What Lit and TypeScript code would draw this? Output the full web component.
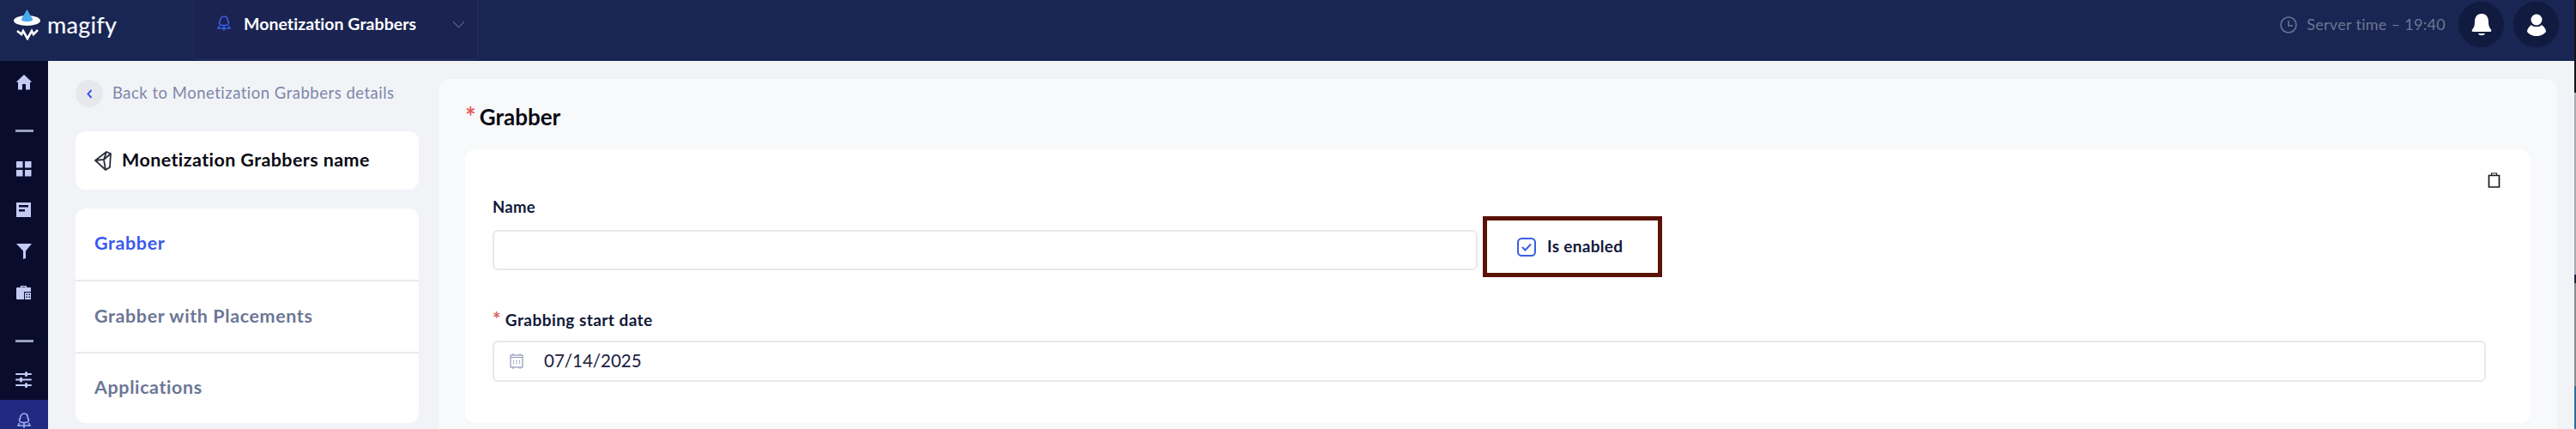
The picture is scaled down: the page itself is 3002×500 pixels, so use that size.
import { LitElement, html, css, svg } from "lit";
import { customElement } from "lit/decorators.js";

const cloud = svg`<path d="M7.500 11.500C4.500 11.500 3.500 8 5.500 6.500C5.500 3 8 1 10 1C12.500 1 14.500 3 14.500 6.500C16.500 8 15.500 11.500 12.500 11.500H7.500Z" fill="none" stroke="currentColor" stroke-width="1.600"/><path d="M10 11.500V18M4 12V15H10M16 12V15H10M2 15H4M16 15H18" fill="none" stroke="currentColor" stroke-width="1.600"/>`;

@customElement("app-root")
export class AppRoot extends LitElement {
  static styles = css`
    :host { display: block; width: 3002px; height: 500px; overflow: hidden; font-family: "Lato", "Liberation Sans", sans-serif; }
    * { box-sizing: border-box; }
    .shell { display: flex; width: 3002px; height: 500px; }
    .app { width: 3000px; height: 500px; display: flex; flex-direction: column; }
    .strip { width: 2px; height: 500px; background: linear-gradient(#141414 0 108px, #a9acb6 108px 320px, #1f2340 320px 330px, #8b8d92 330px 450px, #2c6c9c 450px 500px); }

    header { height: 71px; flex: none; background: #192553; display: flex; align-items: flex-start; }
    .logo { width: 225px; height: 71px; display: flex; align-items: flex-start; padding: 0 0 0 16px; gap: 7px; }
    .logo svg { margin-top: 11px; flex: none; }
    .logo span { color: #f4f6fb; font-size: 27px; font-weight: 500; line-height: 30px; margin-top: 14px; letter-spacing: 0.2px; }
    .picker { width: 332px; height: 70px; background: #1a2351; border: 1px solid #232e62; border-top: 0; border-radius: 0 0 6px 6px; display: flex; align-items: flex-start; padding: 18px 14px 0 25px; }
    .picker .ic { color: #3a5ee6; flex: none; }
    .picker b { color: #fff; font-size: 19.500px; font-weight: 700; line-height: 20px; margin-left: 13px; flex: 1; white-space: nowrap; letter-spacing: 0.05px; }
    .picker .chev { margin-top: 6px; }
    .hright { margin-left: auto; display: flex; align-items: flex-start; padding: 2px 18px 0 0; }
    .clock { margin: 17px 11px 0 0; }
    .time { color: #6d7693; font-size: 18px; line-height: 22px; margin: 15px 15px 0 0; white-space: nowrap; letter-spacing: 0.3px; }
    .round { width: 53px; height: 53px; border-radius: 50%; background: #111a3f; display: flex; align-items: center; justify-content: center; margin-left: 11px; }
    .round:first-of-type { margin-left: 0; }

    .body { flex: 1; display: flex; min-height: 0; background: #f2f3f7; }
    nav { width: 56px; flex: none; background: #0a0c2e; display: flex; flex-direction: column; align-items: center; padding-top: 16px; gap: 30px; color: #c3cbf5; overflow: hidden; }
    nav svg { display: block; flex: none; }
    .sep { width: 21px; height: 3px; background: #98a2bb; margin: 16px 0 4px; flex: none; }
    .active { width: 56px; height: 48px; flex: none; background: #20297f; margin-top: -16px; display: flex; justify-content: center; padding-top: 15px; color: #9fb0f7; }

    .left { width: 400px; flex: none; margin-left: 32px; padding-top: 22px; }
    .back { display: flex; align-items: center; gap: 11px; height: 32px; }
    .circle { width: 32px; height: 32px; border-radius: 50%; background: #e7e8ee; display: flex; align-items: center; justify-content: center; }
    .back span { color: #7c86a8; font-size: 18.500px; letter-spacing: 0.5px; white-space: nowrap; margin-top: -2px; }
    .namecard { margin-top: 28px; height: 68px; background: #fff; border-radius: 12px; display: flex; align-items: center; padding-left: 22px; gap: 12px; }
    .namecard b { font-size: 21.500px; color: #0a0a14; font-weight: 700; white-space: nowrap; letter-spacing: 0.4px; margin-top: -3px; }
    .menu { margin-top: 22px; height: 250px; background: #fff; border-radius: 12px; display: flex; flex-direction: column; }
    .menu div { flex: 1; display: flex; align-items: center; padding-left: 22px; padding-bottom: 2px; font-size: 21.500px; font-weight: 700; letter-spacing: 0.6px; color: #6c7696; border-top: 2px solid #e9e9f0; }
    .menu div:first-child { border-top: 0; color: #3a59ee; padding-bottom: 4px; }

    .panel { flex: 1; margin: 20px 19px 0 22px; height: 500px; background: #f8f9fb; border: 1px solid #f0f1f4; border-radius: 12px; padding: 0 31px; min-width: 0; }
    h2 { margin: 0; height: 82px; padding-top: 31px; display: flex; align-items: flex-start; gap: 4px; font-size: 26px; line-height: 26px; font-weight: 700; color: #0a0a14; }
    .star { color: #e25c5c; font-weight: 700; }
    h2 .star { font-size: 30px; line-height: 24px; }
    .card { background: #fff; border-radius: 12px; height: 319px; padding: 27px 52px 0 32px; }
    .tools { display: flex; justify-content: flex-end; height: 18px; margin-right: -17px; }
    .row { display: flex; align-items: flex-start; margin-top: 12px; }
    .field { width: 1148px; flex: none; }
    label { display: flex; gap: 6px; height: 20px; align-items: center; font-size: 18.500px; font-weight: 700; letter-spacing: 0.3px; color: #11183a; white-space: nowrap; }
    .input { height: 47px; margin-top: 17px; border: 2px solid #e8e8ef; border-radius: 6px; background: #fff; display: flex; align-items: center; padding-left: 18px; }
    .mark { margin: 21px 0 -8px 6px; width: 209px; height: 71px; border: 5px solid #5a1208; display: flex; align-items: center; padding-left: 35px; gap: 13px; font-size: 19px; font-weight: 700; letter-spacing: 0.3px; color: #11183a; white-space: nowrap; }
    .mark span { margin-top: -3px; }
    .date { margin-top: 47px; }
    .date label { gap: 5px; font-size: 19px; letter-spacing: 0.45px; }
    .date label .star { font-size: 22px; line-height: 14px; }
    .date .input { height: 48px; margin-top: 15px; width: 2323px; color: #1a2040; font-size: 20.500px; gap: 24px; letter-spacing: 0px; }
    .date .input span { margin-top: -2px; }
  `;

  render() {
    return html`<div class="shell"><div class="app">
      <header>
        <div class="logo">
          <svg width="32" height="36" viewBox="0 0 32 36">
            <ellipse cx="15.500" cy="13" rx="15.500" ry="6" fill="#fff"/>
            <path d="M15.500 0L22.500 12C20 15 11 15 8.500 12Z" fill="#4aa8ef"/>
            <path d="M4 25L9 29L11 25L16 34L21 25L23 29L28 24" fill="none" stroke="#fff" stroke-width="2.600"/>
          </svg>
          <span>magify</span>
        </div>
        <div class="picker">
          <svg class="ic" width="20" height="20" viewBox="0 0 20 20">${cloud}</svg>
          <b>Monetization Grabbers</b>
          <svg class="chev" width="15" height="9" viewBox="0 0 15 9"><path d="M1 1L7.500 8L14 1" fill="none" stroke="#7b84a3" stroke-width="1"/></svg>
        </div>
        <div class="hright">
          <svg class="clock" width="20" height="20" viewBox="0 0 20 20"><circle cx="10" cy="10" r="9" fill="none" stroke="#6d7693" stroke-width="1.500"/><path d="M10 5V11H15" fill="none" stroke="#6d7693" stroke-width="1.500"/></svg>
          <span class="time">Server time – 19:40</span>
          <div class="round"><svg width="24" height="26" viewBox="0 0 24 26" fill="#fff"><path d="M12 0C6 0 4 5 4 9C4 14 3 16 1 18.500C0 20 1 21 2 21H22C23 21 24 20 23 18.500C21 16 20 14 20 9C20 5 18 0 12 0Z"/><path d="M8 23H16C15 26 9 26 8 23Z"/></svg></div>
          <div class="round"><svg width="22" height="26" viewBox="0 0 22 26" fill="#fff"><circle cx="11" cy="7" r="6.500"/><path d="M5 13C7 16 15 16 17 13C20 15 22 18 22 21C20 24 15 26 11 26C7 26 2 24 0 21C0 18 2 15 5 13Z"/></svg></div>
        </div>
      </header>
      <div class="body">
        <nav>
          <svg width="18" height="18" viewBox="0 0 18 18" fill="currentColor"><path d="M9 0L18 8.500L16 9V17.500H11V11H7V17.500H2V9L0 8.500Z"/></svg>
          <div class="sep"></div>
          <svg width="18" height="18" viewBox="0 0 18 18" fill="currentColor"><rect width="7.500" height="7.500"/><rect x="10" width="7.500" height="7.500"/><rect y="10" width="7.500" height="7.500"/><rect x="10" y="10" width="7.500" height="7.500"/></svg>
          <svg width="18" height="18" viewBox="0 0 18 18"><rect width="17" height="17" fill="currentColor"/><rect x="3" y="3" width="11" height="2.500" fill="#0a0c2e"/><rect x="3" y="8" width="7" height="2.500" fill="#0a0c2e"/></svg>
          <svg width="18" height="18" viewBox="0 0 18 18" fill="currentColor"><path d="M0 0H18L11 8.500V17L8 18V8.500Z"/></svg>
          <svg width="18" height="18" viewBox="0 0 18 18"><path d="M5 3V1H12V3H17V8H9V17H1.500C0.500 17 0 16.500 0 15.500V4C0 3.500 0.500 3 1.500 3H5ZM6.500 3H10.500V2.300H6.500Z" fill="currentColor" fill-rule="evenodd"/><path d="M10 9H17V17H10Z" fill="currentColor"/><path d="M11.500 10.500H13V12H11.500ZM14.500 10.500H16V12H14.500ZM11.500 13.500H13V15H11.500ZM14.500 13.500H16V15H14.500Z" fill="#0a0c2e"/></svg>
          <div class="sep"></div>
          <svg width="20" height="19" viewBox="0 0 20 19" fill="currentColor"><rect y="2" width="19" height="2" rx="1"/><rect y="8.500" width="19" height="2" rx="1"/><rect y="15" width="19" height="2" rx="1"/><rect x="11" y="0" width="3" height="6" rx="1.500"/><rect x="5" y="6.500" width="3" height="6" rx="1.500"/><rect x="11" y="13" width="3" height="6" rx="1.500"/></svg>
          <div class="active"><svg width="20" height="20" viewBox="0 0 20 20">${cloud}</svg></div>
        </nav>
        <section class="left">
          <div class="back">
            <div class="circle"><svg width="7" height="11" viewBox="0 0 7 11"><path d="M5.500 1L1.500 5.500L5.500 10" fill="none" stroke="#3a59ee" stroke-width="2"/></svg></div>
            <span>Back to Monetization Grabbers details</span>
          </div>
          <div class="namecard">
            <svg width="20" height="24" viewBox="0 0 20 24"><path d="M1 12L14 2L19 4L18 20L13 23L1 12ZM14 2L11 11L1 12M11 11L13 23M11 11L19 4" fill="none" stroke="#2a2c3a" stroke-width="1.800"/></svg>
            <b>Monetization Grabbers name</b>
          </div>
          <div class="menu">
            <div>Grabber</div>
            <div>Grabber with Placements</div>
            <div>Applications</div>
          </div>
        </section>
        <main class="panel">
          <h2><span class="star">*</span><span>Grabber</span></h2>
          <div class="card">
            <div class="tools">
              <svg width="15" height="18" viewBox="0 0 15 18"><path d="M1.500 3.500H13.500V17H1.500Z" fill="none" stroke="#1c1c1c" stroke-width="1.700"/><path d="M4.500 3V1H10.500V3" fill="none" stroke="#1c1c1c" stroke-width="1.200"/></svg>
            </div>
            <div class="row">
              <div class="field">
                <label>Name</label>
                <div class="input"></div>
              </div>
              <div class="mark">
                <svg width="22" height="22" viewBox="0 0 22 22"><rect x="1" y="1" width="20" height="20" rx="4.500" fill="#fff" stroke="#3a5ee6" stroke-width="2"/><path d="M6 11L9.500 14.500L16 7.500" fill="none" stroke="#3a5ee6" stroke-width="2"/></svg>
                <span>Is enabled</span>
              </div>
            </div>
            <div class="date">
              <label><span class="star">*</span><span>Grabbing start date</span></label>
              <div class="input">
                <svg width="16" height="20" viewBox="0 0 16 20" fill="none" stroke="#9099b8" stroke-width="1.200"><rect x="1" y="3" width="14" height="14"/><path d="M4 1V3M12 1V3M4 17V19M12 17V19M1 5.500H15" /><path d="M4.500 9V13M8 9V13M11.500 9V13" stroke-dasharray="1.500 1"/></svg>
                <span>07/14/2025</span>
              </div>
            </div>
          </div>
        </main>
      </div>
    </div><div class="strip"></div></div>`;
  }
}
